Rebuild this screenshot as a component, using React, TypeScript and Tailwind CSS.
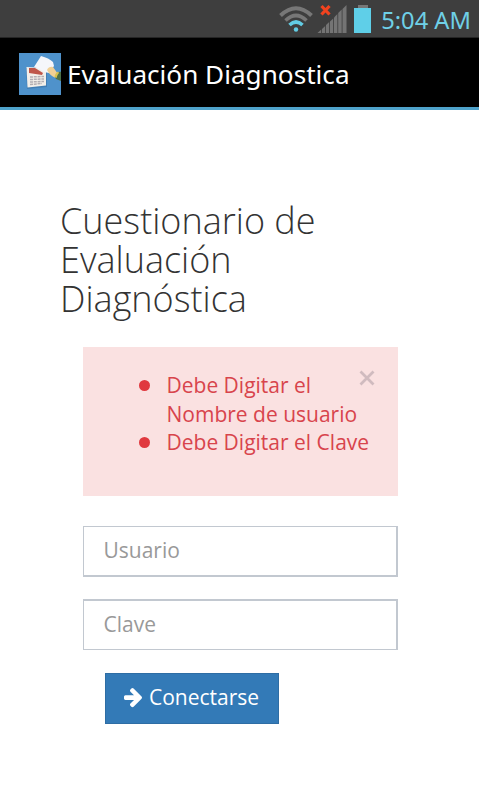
import React from "react";

const errors = ["Debe Digitar el Nombre de usuario", "Debe Digitar el Clave"];

function WifiIcon() {
  return (
    <svg width="34" height="27" viewBox="0 0 34 27" fill="none">
      <path d="M1.500 9.500 Q17 -5 32.500 9.500" stroke="#777777" strokeWidth="4" />
      <path d="M6.500 14.500 Q17 4.500 27.500 14.500" stroke="#777777" strokeWidth="3.600" />
      <path d="M10.500 19 Q17 13 23.500 19" stroke="#62cce4" strokeWidth="3.600" />
      <circle cx="17" cy="23.500" r="2.200" fill="#62cce4" />
    </svg>
  );
}

function SignalIcon() {
  return (
    <svg width="31" height="30" viewBox="0 0 31 30">
      <g fill="#747474">
        <path d="M0.500 29 L4.200 25.500 V29 Z" />
        <path d="M5 25 L8.200 22 V29 H5 Z" />
        <path d="M9 21 L12.200 18 V29 H9 Z" />
        <path d="M13 17.500 L16.200 14.500 V29 H13 Z" />
        <path d="M17 13.500 L20.400 10 V29 H17 Z" />
        <path d="M21.200 9 L24.700 5.500 V29 H21.200 Z" />
        <path d="M25.500 5 L29.500 1 V29 H25.500 Z" />
      </g>
      <path d="M4.500 2 L12.500 10.500 M12.500 2 L4.500 10.500" stroke="#f1431f" strokeWidth="3.200" />
    </svg>
  );
}

function BatteryIcon() {
  return (
    <svg width="18" height="29" viewBox="0 0 18 29">
      <rect x="4" y="0" width="10" height="3" fill="#777777" />
      <rect x="0" y="3" width="17" height="25" fill="#5fcfe8" />
    </svg>
  );
}

function AppIcon() {
  return (
    <svg width="42" height="42" viewBox="0 0 42 42">
      <rect width="42" height="42" fill="#4f92cb" />
      <path d="M7 15 L28 16 L28 34 L8 36 Z" fill="#2f6190" opacity="0.4" />
      <path d="M7.500 14 L27 15 L27 32.500 L8.500 34.500 Z" fill="#f3efe9" />
      <path d="M10 15 L16 15 L24 20 L23 22 L10 20 Z" fill="#c0574a" />
      <g stroke="#b3aeb2" strokeWidth="1.500" strokeDasharray="3 0.800">
        <path d="M11 24 L25 23.500" />
        <path d="M11 26.500 L25 26" />
        <path d="M11 29 L25 28.500" />
        <path d="M11 31.500 L23 30.500" />
      </g>
      <path d="M15 14 L22 3 Q30 5 34 9 L35 13 L30 20 L25 19 Q20 15 15 14 Z" fill="#f5f6fa" />
      <path d="M28 17 Q30 13 34 14 L39 21 L37 25 Q31 23 28 17 Z" fill="#f0d095" />
      <path d="M36 24 Q37 20 41 18.500 L42 19 V28 L37 26 Z" fill="#4d7048" />
      <path d="M35.500 24 Q36 20 39 18.500 L40 20 Q38 22 37.500 25 Z" fill="#d9c34f" />
    </svg>
  );
}

function ArrowIcon() {
  return (
    <svg width="18" height="20" viewBox="0 192 1472 1600" fill="currentColor">
      <path d="M1472 960q0 54-37 91l-651 651q-39 37-91 37-51 0-90-37l-75-75q-38-38-38-91t38-91l293-293h-704q-52 0-84.500-37.500t-32.500-90.500v-128q0-53 32.500-90.500t84.500-37.500h704l-293-294q-38-36-38-90t38-90l75-75q38-38 90-38 53 0 91 38l651 651q37 35 37 90z" />
    </svg>
  );
}

function StatusBar() {
  return (
    <div className="flex h-[37px] items-start justify-end bg-[#3e3e3e] pr-[8px]">
      <div className="mt-[6px]">
        <WifiIcon />
      </div>
      <div className="mt-[4px] ml-[4px]">
        <SignalIcon />
      </div>
      <div className="mt-[5px] ml-[6px]">
        <BatteryIcon />
      </div>
      <span className="ml-[9px] font-['Noto_Sans',sans-serif] text-[23.700px] leading-[40px] whitespace-nowrap text-[#6fd0e6]">
        5:04 AM
      </span>
    </div>
  );
}

function App() {
  const [user, setUser] = React.useState("");
  const [password, setPassword] = React.useState("");
  const [showErrors, setShowErrors] = React.useState(true);

  const inputClass =
    "block w-full border border-[#c2c8d0] bg-white pr-[20px] pb-[2px] pl-[19.500px] text-[21px] text-[#555555] outline-none placeholder:text-[#999999]";

  return (
    <div className="h-[799px] w-[479px] overflow-hidden bg-white font-['Open_Sans',sans-serif]">
      <StatusBar />

      <header className="flex h-[73px] items-center border-t border-b-[3px] border-t-[#252525] border-b-[#4fa3cb] bg-black pt-[2px] pl-[19px]">
        <AppIcon />
        <span className="ml-[6px] pt-[2px] font-['Noto_Sans',sans-serif] text-[26.150px] leading-none whitespace-nowrap text-white">
          Evaluación Diagnostica
        </span>
      </header>

      <main className="px-[60px] pt-[91px]">
        <h1 className="w-[300px] text-[36px] leading-[39px] font-light text-[#333333]">
          Cuestionario de Evaluación Diagnóstica
        </h1>

        <form
          className="mt-[29px] ml-[23px] w-[315px]"
          onSubmit={(e) => {
            e.preventDefault();
            setShowErrors(!user || !password);
          }}
        >
          {showErrors && (
            <div className="relative h-[149px] bg-[#fae1e1] pt-[24px] pl-[83.500px] text-[21px] leading-[28.500px] text-[#d8444c]">
              <ul>
                {errors.map((error) => (
                  <li key={error} className="relative w-[215px]">
                    <span className="absolute top-[8.500px] -left-[27.500px] size-[11px] rounded-full bg-[#e0393f]" />
                    {error}
                  </li>
                ))}
              </ul>
              <button
                type="button"
                aria-label="Cerrar"
                onClick={() => setShowErrors(false)}
                className="absolute top-[23px] right-[23px]"
              >
                <svg width="16" height="16" viewBox="0 0 16 16" stroke="#d0bbbf" strokeWidth="2.800">
                  <path d="M1.500 1.500 L14.500 14.500 M14.500 1.500 L1.500 14.500" />
                </svg>
              </button>
            </div>
          )}

          <input
            value={user}
            onChange={(e) => setUser(e.target.value)}
            placeholder="Usuario"
            className={`${inputClass} mt-[30px] h-[51px] border-r-2 border-b-2`}
          />
          <input
            type="password"
            value={password}
            onChange={(e) => setPassword(e.target.value)}
            placeholder="Clave"
            className={`${inputClass} mt-[22px] h-[51px] border-t-2 border-r-2`}
          />

          <button
            type="submit"
            className="mt-[23px] ml-[22px] flex h-[51px] w-[174px] items-center border border-[#2e6da4] bg-[#337ab7] pb-[2px] pl-[18px] text-[21px] text-white"
          >
            <ArrowIcon />
            <span className="ml-[7px]">Conectarse</span>
          </button>
        </form>
      </main>
    </div>
  );
}

export default App;
